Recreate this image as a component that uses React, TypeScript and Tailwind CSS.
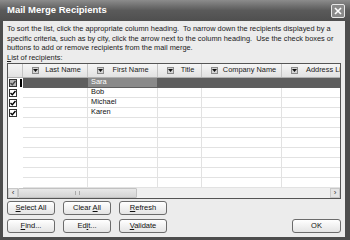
import React from 'react';

const font = { fontFamily: '"Liberation Sans", Arial, sans-serif' };

const columns = [
  { label: 'Last Name', w: 'w-[65px]' },
  { label: 'First Name', w: 'w-[70px]' },
  { label: 'Title', w: 'w-[44px]' },
  { label: 'Company Name', w: 'w-[80px]' },
  { label: 'Address Line 1', w: 'w-[100px]' },
];

const people = ['Sara', 'Bob', 'Michael', 'Karen'];

const DropArrow = () => (
  <span className="flex h-[7px] w-[7px] shrink-0 items-center justify-center border border-[#8a8a8a] bg-[#d4d4d4]">
    <svg width="5" height="3" viewBox="0 0 5 3">
      <path d="M0 0h5L2.5 3z" fill="#111" />
    </svg>
  </span>
);

const Check = ({ dim }: { dim?: boolean }) => (
  <span
    className={`flex h-[8px] w-[8px] shrink-0 items-center justify-center border border-[#333] ${
      dim ? 'bg-[#b8b8b8]' : 'bg-white'
    }`}
  >
    <svg width="6" height="6" viewBox="0 0 6 6">
      <path d="M0.5 3 L2.3 4.8 L5.5 1" stroke={dim ? '#444' : '#000'} strokeWidth="1.4" fill="none" />
    </svg>
  </span>
);

const Btn = ({ children, w = 'w-[48px]' }: { children: React.ReactNode; w?: string }) => (
  <button
    className={`${w} flex h-[14px] items-center justify-center rounded-[3px] border border-[#6b6b6b] bg-gradient-to-b from-white to-[#e4e4e4] text-[7.5px] leading-none text-[#111]`}
  >
    <span className="whitespace-pre">{children}</span>
  </button>
);

export default function App() {
  const emptyRows = 7;

  return (
    <div style={font} className="flex h-[240px] w-[350px] flex-col overflow-hidden bg-[#4d4d4d]">
      {/* title bar */}
      <div className="flex h-[21px] items-center justify-between bg-gradient-to-b from-[#8c8c8c] via-[#5a5a5a] to-[#4f4f4f] pl-[7px] pr-[5px]">
        <span className="text-[9.5px] font-bold text-white">Mail Merge Recipients</span>
        <span className="flex h-[14px] w-[14px] items-center justify-center rounded-[2px] border border-[#e8e8e8] bg-[#8a8a8a]">
          <svg width="8" height="8" viewBox="0 0 8 8">
            <path d="M1 1L7 7M7 1L1 7" stroke="#fff" strokeWidth="1.6" />
          </svg>
        </span>
      </div>

      {/* body */}
      <div className="ml-[3px] mr-[5px] mb-[3px] flex flex-1 flex-col bg-[#ececec] px-[4px] pt-[3px]">
        <p className="text-[7.4px] leading-[9.5px] text-[#1a1a1a]">
          To sort the list, click the appropriate column heading.&nbsp; To narrow down the recipients displayed by a
          specific criteria, such as by city, click the arrow next to the column heading.&nbsp; Use the check boxes or
          buttons to add or remove recipients from the mail merge.
        </p>
        <p className="text-[7.4px] leading-[9px] text-[#1a1a1a]">
          <u>L</u>ist of recipients:
        </p>

        {/* grid */}
        <div className="mt-[1px] flex h-[136px] flex-col overflow-hidden border border-[#555] bg-white">
          <div className="flex h-[14px] shrink-0 border-b border-[#b0b0b0] bg-gradient-to-b from-[#f6f6f6] to-[#e2e2e2] text-[7.4px] text-[#222]">
            <div className="w-[15px] shrink-0 border-r border-[#c4c4c4]" />
            {columns.map((c, j) => (
              <div key={c.label} className={`${c.w} flex shrink-0 items-center border-r border-[#c4c4c4] pl-[9px]`}>
                <DropArrow />
                {j === columns.length - 1 ? (
                  <span className="ml-[8px] whitespace-nowrap">{c.label}</span>
                ) : (
                  <span className="flex-1 whitespace-nowrap text-center">{c.label}</span>
                )}
              </div>
            ))}
          </div>

          <div className="flex-1 overflow-hidden text-[7.4px]">
            {people.map((p, i) => {
              const sel = i === 0;
              return (
                <div key={p} className="flex h-[10px]">
                  <div className="flex w-[15px] shrink-0 items-center bg-white pl-[1px]">
                    <Check dim={sel} />
                    {sel && <span className="ml-[3px] h-[8px] w-[2px] bg-black" />}
                  </div>
                  {columns.map((c, j) => (
                    <div
                      key={c.label}
                      className={`${c.w} flex shrink-0 items-center border-b border-r pl-[3px] ${
                        sel ? 'border-[#5e5e5e]' : 'border-[#e2e2e2]'
                      } ${sel ? (j === 1 ? 'bg-[#8a8a8a] text-white' : 'bg-[#5e5e5e]') : 'text-[#111]'}`}
                    >
                      {j === 1 ? p : ''}
                    </div>
                  ))}
                </div>
              );
            })}
            {Array.from({ length: emptyRows }).map((_, i) => (
              <div key={i} className="flex h-[10px]">
                <div className="w-[15px] shrink-0" />
                {columns.map((c) => (
                  <div key={c.label} className={`${c.w} shrink-0 border-b border-r border-[#e2e2e2]`} />
                ))}
              </div>
            ))}
          </div>

          {/* horizontal scrollbar */}
          <div className="flex h-[10px] shrink-0 bg-[#f0f0f0]">
            <span className="flex w-[10px] items-center justify-center border border-[#c8c8c8] bg-[#e4e4e4] text-[8px] leading-none text-[#333]">
              ‹
            </span>
            <span className="flex w-[119px] items-center justify-center rounded-[1px] border border-[#c2c2c2] bg-gradient-to-b from-[#e8e8e8] to-[#d4d4d4]">
              <span className="h-[4px] w-[5px] border-x border-[#aaa]" />
            </span>
            <span className="flex-1" />
            <span className="flex w-[10px] items-center justify-center border border-[#c8c8c8] bg-[#e4e4e4] text-[8px] leading-none text-[#333]">
              ›
            </span>
          </div>
        </div>

        {/* buttons */}
        <div className="mt-[2px] flex gap-[8px]">
          <Btn>
            <u>S</u>elect All
          </Btn>
          <Btn>
            Clear <u>A</u>ll
          </Btn>
          <Btn>
            <u>R</u>efresh
          </Btn>
        </div>
        <div className="mt-[4px] flex items-center gap-[8px]">
          <Btn>
            <u>F</u>ind...
          </Btn>
          <Btn>
            Ed<u>i</u>t...
          </Btn>
          <Btn>
            <u>V</u>alidate
          </Btn>
          <div className="flex-1" />
          <Btn w="w-[49px]">OK</Btn>
        </div>
      </div>
    </div>
  );
}
